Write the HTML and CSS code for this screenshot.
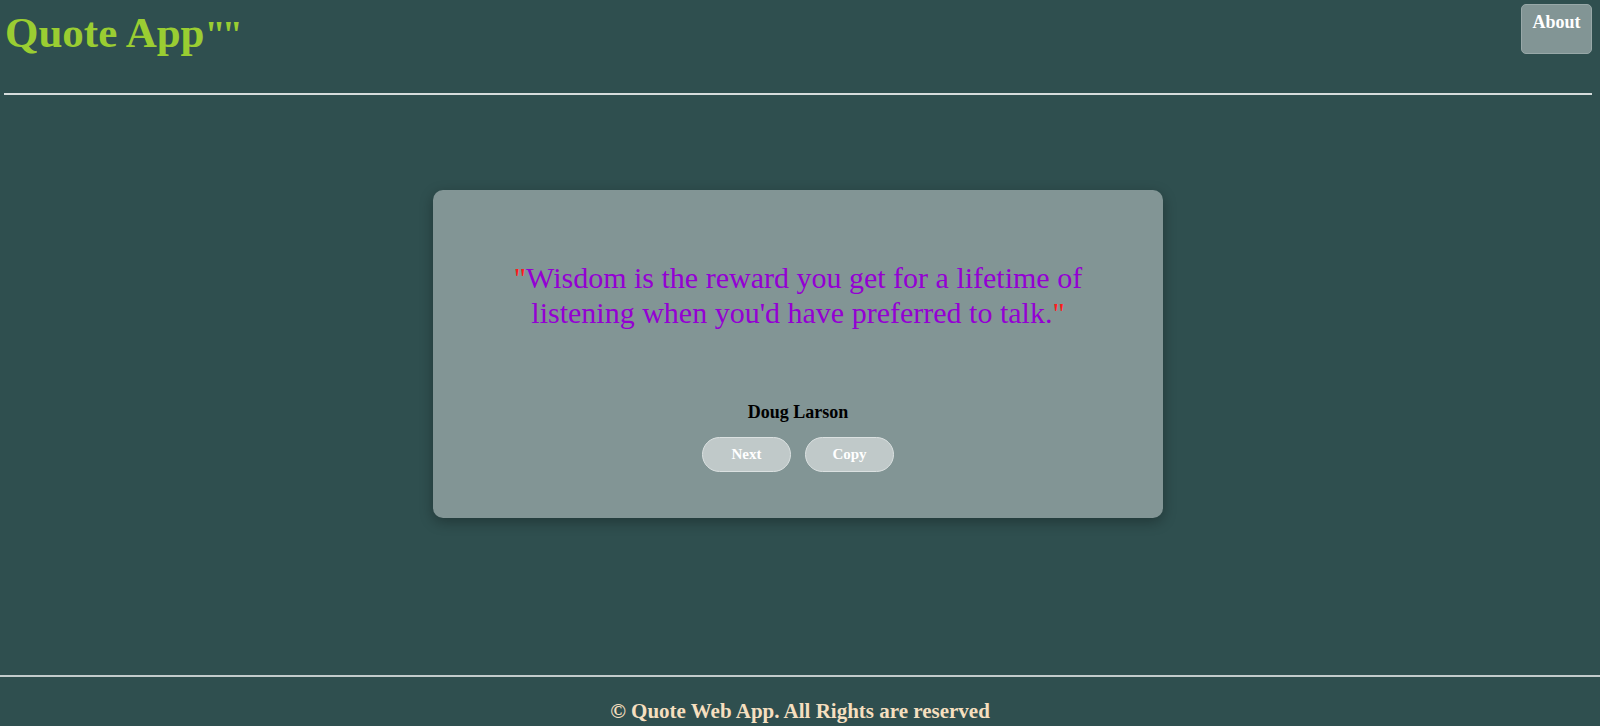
FILE: index.html
```html
<!DOCTYPE html>
<html>
<head>
<meta charset="utf-8">
<link rel="stylesheet" href="styles.css">
</head>
<body>
<div class="page">
  <header class="header">
    <h1 class="title">Quote App<span class="title-marks">""</span></h1>
    <button class="about">About</button>
  </header>
  <main class="main">
    <section class="card">
      <p class="quote"><span class="mark">"</span>Wisdom is the reward you get for a lifetime of listening when you'd have preferred to talk.<span class="mark">"</span></p>
      <p class="author">Doug Larson</p>
      <div class="actions">
        <button class="pill">Next</button>
        <button class="pill">Copy</button>
      </div>
    </section>
  </main>
  <footer class="footer">
    <p class="copy">© Quote Web App. All Rights are reserved</p>
  </footer>
</div>
</body>
</html>
```
FILE: styles.css
```css
* { box-sizing: border-box; }
html, body {
  margin: 0;
  height: 100%;
  background: #2f4f4f;
  font-family: "Liberation Serif", "DejaVu Serif", serif;
}
.page {
  height: 726px;
  display: flex;
  flex-direction: column;
  overflow: hidden;
}
.header {
  margin: 0 8px 0 4px;
  height: 95px;
  border-bottom: 2px solid #d6dcdc;
  display: flex;
  justify-content: space-between;
  align-items: flex-start;
}
.title {
  margin: 7px 0 0 1px;
  font-size: 43px;
  line-height: 52px;
  font-weight: 700;
  color: #9acd32;
}
.title-marks {
  letter-spacing: -4px;
  font-size: 38px;
}
.about {
  margin-top: 4px;
  width: 71px;
  height: 50px;
  padding: 7px 0 0;
  display: flex;
  justify-content: center;
  align-items: flex-start;
  background: #829595;
  border: 1px solid #98a8a8;
  border-radius: 5px;
  color: #fff;
  font-family: inherit;
  font-weight: 700;
  font-size: 18px;
}
.main {
  flex: 1;
  display: flex;
  justify-content: center;
  align-items: flex-start;
  padding: 95px 4px 0 0;
}
.card {
  width: 730px;
  height: 328px;
  background: #829595;
  border-radius: 10px;
  box-shadow: 0 4px 14px rgba(0, 0, 0, 0.3);
  padding: 70px 60px 0;
  display: flex;
  flex-direction: column;
  align-items: center;
}
.quote {
  margin: 0;
  width: 600px;
  text-align: center;
  font-size: 30px;
  line-height: 35px;
  color: #9400d3;
}
.mark { color: #ff1a1a; }
.author {
  margin: 71px 0 0;
  font-size: 18px;
  line-height: 22px;
  font-weight: 700;
  color: #000;
}
.actions {
  margin-top: 14px;
  display: flex;
  gap: 14px;
}
.pill {
  width: 89px;
  height: 35px;
  border-radius: 18px;
  background: #c0c9c9;
  border: 1px solid #dbe1e1;
  color: #fff;
  font-family: inherit;
  font-weight: 700;
  font-size: 15px;
  padding: 0;
}
.footer {
  height: 51px;
  border-top: 2px solid #c3cccc;
  display: flex;
  justify-content: center;
}
.copy {
  margin: 20px 0 0;
  font-size: 21px;
  line-height: 28px;
  font-weight: 700;
  color: #f5dfbf;
}
```
